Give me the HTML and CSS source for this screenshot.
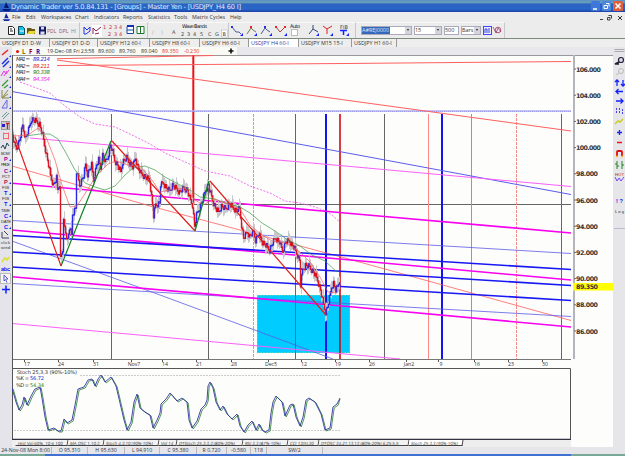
FILE: index.html
```
<!DOCTYPE html>
<html>
  <head>
    <meta charset="utf-8">
    <title>Dynamic Trader</title>
    <link rel="stylesheet" href="styles.css">
  </head>
  <body>
    <div class="titlebar">
      <svg class="logo" width="9" height="9" viewBox="0 0 9 9"><path d="M4 0L7 6H2zM0 7h9L7 9H2z" fill="#001878"/></svg>
      <svg class="title-text" width="234" height="12"><text x="0" y="9" textLength="230">Dynamic Trader ver 5.0.84.131 - [Groups] - Master Yen - [USDJPY_H4 60 I]</text></svg>
      <div class="winbtns">
        <svg width="9" height="10"><rect width="9" height="10" rx="1.5" fill="#3f78d8"/><path d="M2 8h4" stroke="#fff" stroke-width="1.5"/></svg>
        <svg width="9" height="10"><rect width="9" height="10" rx="1.5" fill="#4a86dc"/><path d="M4 2.5h3v3M2 4.5h3.500v3H2z" stroke="#fff" fill="none"/></svg>
        <svg width="10" height="10"><rect width="10" height="10" rx="1.5" fill="#e0603c"/><path d="M2.500 2.500l5 5M7.500 2.500l-5 5" stroke="#fff" stroke-width="1.500"/></svg>
      </div>
    </div>
    <div class="menubar">
      <svg width="9" height="8" viewBox="0 0 9 9"><path d="M4 0L7 6H2zM0 7h9L7 9H2z" fill="#1028a0"/></svg>
      <span>File</span><span>Edit</span><span>Workspaces</span><span>Chart</span><span>Indicators</span><span>Reports</span><span>Statistics</span><span>Tools</span><span>Matrix Cycles</span><span>Help</span>
      <svg class="mdi" width="26" height="9"><path d="M1 6.500h3M9.500 2.500h3v3M8.500 4.500h2.500v2.500H8.500z" stroke="#444" fill="none"/><path d="M19 3l4 4M23 3l-4 4" stroke="#333"/></svg>
    </div>
    <div class="toolbar">
      <div class="group files">
        <svg width="43" height="16">
          <path d="M4.500 4.500h4l2 2v6h-6zM6 7h2M6 9h3" fill="#fff" stroke="#222"/>
          <path d="M14.500 4.500h4l2 2v6h-6z" fill="#10c8e8" stroke="#145"/><path d="M16 9h4" stroke="#fff"/>
          <path d="M23 6h4l1 1h3v5h-8z" fill="#665a10"/><path d="M25 9h7l-2 3h-7z" fill="#e8d830"/>
          <path d="M35 4.500h7v8h-7z" fill="#10186c"/><path d="M37 5h3v2.500h-3zM36.500 9.500h4v3h-4z" fill="#dde"/>
        </svg>
        <span class="pdl">PDL</span><span class="pdl">DPL</span><span class="dim">HI</span>
      </div>
      <div class="group modes">
        <svg width="44" height="17">
          <path d="M2 12V5l3 3 3-3v4L4 12z" fill="none" stroke="#2030f0"/>
          <rect x="10" y="3" width="10" height="12" fill="#fff"/><path d="M11 12V6l3 3 5-4M13 12l4-1" fill="none" stroke="#902050"/>
          <g class="wave red"><text x="21" y="6.500">1</text><text x="27" y="6.500">2</text><text x="32" y="6.500">3</text><text x="37" y="6.500">4</text><text x="26" y="13.500">2</text><text x="32" y="13.500">3</text><text x="37" y="13.500">4</text></g>
        </svg>
        <svg width="20" height="15"><path d="M1 3.500h6.500v7H1zM1 7h6.500" fill="#fff" stroke="#164aa0"/><path d="M1 3h7" stroke="#1030b8" stroke-width="2"/><path d="M11 3.500h7v7h-7zM14.500 3v8" fill="#fff" stroke="#187828"/></svg>
      </div>
      <div class="group bands">
        <svg width="79" height="17"><g class="wave"><text x="3" y="12" fill="#aaa">/</text><text x="12" y="12" fill="#aaa">)</text><text x="23" y="12">A</text><text x="33" y="6" textLength="25" fill="#111">Wave Bands</text><text x="32" y="14">2</text><text x="38" y="14">3</text><text x="44" y="14">4</text><text x="51" y="14">5</text><text x="59" y="14">C</text><text x="66" y="14">G</text><rect x="72.500" y="8" width="6" height="7" fill="#fff" stroke="#aaa" stroke-width=".5"/><text x="73.500" y="14">B</text></g></svg>
      </div>
      <div class="group swings">
        <svg width="76" height="17">
          <g fill="none" stroke="#4a5a9a"><path d="M2 5l4 5h3l2 2"/><path d="M17 12l4-6 2 2 3 2" stroke="#775"/><path d="M31 12l4-6 2 2 3 2"/><path d="M46 5l4 5 5-5" stroke="#a44"/></g>
          <path d="M20 4h2v2h-2zM45 4h2v2h-2zM54 4h2v2h-2z" fill="#e22"/><path d="M1 4h2v2H1zM34 4h2v2h-2z" fill="#23d"/>
          <path d="M10 14h3v-3zM24 14h3v-3zM39 14h3v-3zM54 14h3v-3z" fill="#12f"/>
          <g class="wave"><text x="60" y="6" textLength="10" fill="#111">Auto</text></g><rect x="61.500" y="7.500" width="6" height="6" fill="#fff" stroke="#bbb"/>
        </svg>
        <svg width="46" height="17">
          <path d="M2 12l4-5 5 3M6 3v4" fill="none" stroke="#347"/><path d="M16 4l4 3 5-3M20 7v5" fill="none" stroke="#d22"/>
          <path d="M9 14h3v-3zM23 14h3v-3zM39 14h3v-3z" fill="#12f"/><g class="wave"><text x="33" y="7" textLength="8">FIB</text></g><path d="M33 8.500h7M36.500 9v4" stroke="#12f" stroke-width="1.500"/>
        </svg>
      </div>
      <div class="group fields">
        <div class="field symbol"><b>A#REJ0000</b><i></i></div>
        <div class="field period">15<i></i></div>
        <div class="field count">500</div>
        <div class="field bars">Bars<i></i></div>
        <svg width="19" height="11"><rect x=".5" y="1.500" width="8" height="8" fill="#eef" stroke="#44f"/><path d="M2 8V4h2v4M6 3v5" stroke="#34e" fill="none"/><path d="M10 2l3 6 2-5 3 4" stroke="#a04878" fill="none" stroke-width=".8"/><circle cx="15" cy="5" r="2.800" stroke="#a03060" fill="none" stroke-width=".8"/></svg>
      </div>
    </div>
    <div class="charttabs">
      <span>USDJPY D1 D-W</span><span>USDJPY D1 D-D</span><span>USDJPY H12 60-I</span><span>USDJPY H8 60-I</span><span>USDJPY H6 60-I</span><span class="active">USDJPY H4 60-I</span><span>USDJPY M15 15-I</span><span>USDJPY H1 60-I</span>
    </div>
    <div class="main">
      <div class="drawtools">
        <svg width="12" height="247" viewBox="0 47 12 247">
          <g fill="none">
            <path d="M2 55l6-5" stroke="#e22" stroke-width="1.500"/>
            <path d="M2 64l6-6M3 67l6-6" stroke="#23d" stroke-width="1.500"/>
            <path d="M1 76l3-5 2 3 3-4M4 76l3-5" stroke="#e3d"/>
            <path d="M2 86l6-6M4 88l4-3" stroke="#393" stroke-width="1.200"/>
            <path d="M2 90v8h7M2 98l6-8M2 98l6-4" stroke="#884"/>
            <path d="M2 108l5-8v8H2" stroke="#66d"/>
            <path d="M2 117l5-5M3 119l6-6" stroke="#698"/>
            <rect x="1.500" y="121.500" width="8" height="8" fill="#ccc" stroke="#999"/>
            <path d="M2 124h3v3H2z" fill="#22c"/><path d="M6 123.500h3M7.500 124v5" stroke="#b22" stroke-width="1.300"/>
            <rect x="3.500" y="133.500" width="5" height="5" stroke="#f66"/><path d="M3 133h1M8 133h1M3 139h1M8 139h1" stroke="#f66"/>
            <path d="M1 148l2-3 2 4 2-6 2 3" stroke="#245"/>
            <path d="M2 232v6h7M4 231l4 4" stroke="#445"/>
            <path d="M2 262l3-4 2 2 2-3" stroke="#dd3" stroke-width="1.500"/>
            <rect x=".5" y="273.500" width="10" height="10" fill="#f6f6f6" stroke="#bbb"/><path d="M4 275v6l1.500-1.500 1.500 3M4 275l4 4H6" stroke="#55c"/>
            <path d="M2 289.500h8M6 285.500v8" stroke="#12f" stroke-width="1.500"/>
          </g>
          <path d="M9 57h2v-2zM9 68h2v-2zM9 78h2v-2zM9 88h2v-2zM9 98h2v-2zM9 109h2v-2zM9 161h2v-2zM9 172h2v-2zM9 184h2v-2zM9 195h2v-2zM9 206h2v-2zM9 217h2v-2zM9 229h2v-2z" fill="#12f"/>
          <g class="toolcap">
            <text x="1" y="155" textLength="9">BOW</text><text x="1" y="166.300" textLength="9">PRICE</text><text x="2" y="177.600" textLength="8">PCT</text><text x="2" y="188.900" textLength="7">FIB</text><text x="2" y="200.200" textLength="7">FIB</text><text x="1" y="211.500" textLength="9">TIME</text><text x="1" y="222.800" textLength="10">DATE</text><text x="1" y="244" textLength="9">click</text><text x="1" y="249" textLength="9">wind</text>
          </g>
          <g class="toolkey">
            <text x="4" y="161.200" fill="#909">P</text><text x="4" y="172.500" fill="#909">C</text><text x="4" y="183.800" fill="#b15">P</text><text x="4" y="195.100">T</text><text x="4" y="206.400">T</text><text x="4" y="217.700">C</text><text x="4" y="229">C</text><text x="1" y="271" textLength="9">abc</text>
          </g>
        </svg>
      </div>
      <div class="center">
        <div class="inforow">
          <i class="dot"></i><b class="olive">L</b><b class="maroon">F</b><b class="navy">R</b>
          <span>19-Dec-08 Fri 23:58</span><span>89.600</span><span>89.760</span><span>89.040</span><span class="down">89.350</span><span class="down">-0.230</span>
          <svg width="6" height="6"><path d="M3 .5v5M.5 3h5" stroke="#111" stroke-width="1.600"/></svg>
        </div>
        <svg class="chart" id="chart" width="601" height="385" viewBox="12 55 601 385">
          <path d="M12 55.500h601" stroke="#999"/>
          <path d="M574 55v304" stroke="#b4b4bc" stroke-width="2"/>
          <rect x="257" y="295" width="93" height="58" fill="#00ccff"/>
          <rect x="257.500" y="295.500" width="92" height="57" fill="none" stroke="#8d9" stroke-dasharray="1 2"/>
          <!-- time projections -->
          <g stroke="#666"><path d="M111.500 114v245M208.500 114v245M295.500 114v245M384.500 114v245M561.500 114v245"/><path d="M12 204.500h559"/><path d="M471.500 114v245" stroke="#999"/></g>
          <g stroke="#f88"><path d="M428.500 114v245"/><path d="M253.500 114v245M516.500 114v245" stroke-dasharray="3 1"/></g>
          <path d="M326 114v245M442 114v245" stroke="#1414f0" stroke-width="2"/>
          <path d="M340 114v245" stroke="#d00a18" stroke-width="1.600"/>
          <path d="M193.300 55v150" stroke="#ee1018" stroke-width="2"/>
          <!-- trend lines -->
          <g fill="none">
            <path d="M12 111h559" stroke="#b0b0f4" stroke-width="1.400"/>
            <path d="M12 111.500h559" stroke="#8080e0" stroke-dasharray="1 1" stroke-width=".6"/>
            <path d="M57 60L345 100L571 131M57 58.700L213 55.500M57 65.500L345 63.500L571 61.500" stroke="#ff6060"/>
            <path d="M12 166L150 206L345 258L571 320.500" stroke="#ff6060" stroke-width=".8"/>
            <path d="M12 91.500L160 118.500L350 153.500L571 194.500" stroke="#5c5cee"/>
            <path d="M12 220.500L345 240L571 253.500M12 283.500L345 303.500L571 316.500M12 241L160 295L333 359" stroke="#5c5ce8" stroke-width=".8"/>
            <path d="M30 138L160 149.500L345 166L571 186.500M12 323.500L150 336L345 354L400 359" stroke="#fa60fa"/>
            <path d="M20 82L50 93L65 106L80 117L95 124L115 127L130 134L150 144L165 153L185 162L205 171L230 176L250 186L270 193L285 201L300 203L315 207L328 212L340 222" stroke="#f070f0" stroke-dasharray="2 1.500"/>
          </g>
          <g fill="none" stroke-width="1.600">
            <path d="M12 183.300L345 213L571 233M12 230L345 259.500L571 280M12 276.700L345 306.300L571 327" stroke="#f800f0"/>
            <path d="M12 235.500L345 255.500L571 269.500M12 252L345 271.500L571 285.500M12 267L345 286.700L571 300.500" stroke="#1818f4"/>
          </g>
          <g id="candles"></g>
          <!-- moving averages -->
          <g fill="none" stroke-width=".7">
            <path d="M25 136L40 134L50 134L58 139L66 153L75 170L85 183L95 187L105 190L115 186L125 175L133 168L145 166L155 170L165 177L180 185L190 190L200 197L215 199L225 203L240 207L250 213L262 223L275 231L288 240L300 246L312 255L325 261L337 272" stroke="#3c9a4c"/>
            <path d="M14 136L28 135L38 128L46 137L55 160L62 185L70 207L77 206L86 192L96 176L108 164L116 161L128 165L140 166L152 180L160 192L170 190L185 188L195 200L203 205L214 199L225 203L240 209L250 225L262 235L272 241L286 243L300 252L310 262L320 277L328 292L336 293" stroke="#f06060"/>
          </g>
          <g fill="none" stroke-width="1.200"><path d="M15 137L61 266M112 141L195 231M210 181L326 315" stroke="#e02020"/><path d="M61 266L111 141M195 231L209 181" stroke="#108020"/></g>
          <g class="malabels">
            <text x="16" y="61" textLength="14">MA1 =</text><text x="33" y="61" textLength="17" fill="#22d">89.214</text>
            <text x="16" y="67.500" textLength="14">MA2 =</text><text x="33" y="67.500" textLength="17" fill="#e22">89.211</text>
            <text x="16" y="74" textLength="14">MA3 =</text><text x="33" y="74" textLength="17" fill="#171">90.338</text>
            <text x="16" y="80.500" textLength="14">MA4 =</text><text x="33" y="80.500" textLength="17" fill="#e2e">94.354</text>
          </g>
          <g id="prices" class="prices"><rect x="573" y="283" width="40" height="7.500" fill="#ffff00"/><text x="576" y="289.300" textLength="22">89.350</text></g>
          <path d="M12 359.500h559" stroke="#777"/>
          <g id="dates" class="dates"></g>
          <!-- stochastic panel -->
          <path d="M12 368.500h558.500V440" fill="none" stroke="#555"/><path d="M12.500 55v385" stroke="#555"/><path d="M12 439.500h559" stroke="#334" stroke-width="1.500"/>
          <path d="M80 375.500h261M14 430.500h327" stroke="#ccc" stroke-dasharray="2 1"/>
          <g id="stoch" fill="none"></g>
          <rect x="16" y="370" width="30" height="17" fill="#fdfdfb"/>
          <g class="stochlabels"><text x="17" y="374.300" textLength="60">Stoch 25,3,3 (90%-10%)</text><text x="16" y="380.400" textLength="13">%K =</text><text x="30" y="380.400" textLength="14" fill="#22b">56.72</text><text x="16" y="386.500" textLength="13">%D =</text><text x="30" y="386.500" textLength="14" fill="#282">54.34</text></g>
        </svg>
        <div class="studytabs">
          <span>Hist Vol 60%, 10-6 100</span><span>MA OSC 1,10,3</span><span>Stoch 4,3,10 (90%-10%)</span><span>Vol 14</span><span>DTStoch 25,3,3,3 (80%-20%)</span><span>RSI 3,3 (87%-10%)</span><span>CCI 13(5),30</span><span>DTOSC 34,21,13,13 (80%-20%) 6,25,5,5</span><span class="active">Stoch 25,3,3 (90%-10%)</span>
        </div>
      </div>
      <div class="sidetools">
        <svg width="12" height="247" viewBox="613 47 12 247">
          <path d="M614.500 49.500h10M614.500 51.500h10" stroke="#aaa"/>
          <circle cx="621" cy="60" r="2.500" fill="#dde" stroke="#223" stroke-width="1.200"/><path d="M619 62l-4 2h4" stroke="#223" fill="none" stroke-width="1.500"/>
          <circle cx="621" cy="71" r="2.500" fill="none" stroke="#bbb"/><path d="M619 73l-3 2" stroke="#bbb"/>
          <g stroke="#12f" stroke-width="1.300" fill="none"><path d="M617 86v-6M615 82l2-2 2 2M623 80v6M621 84l2 2 2-2M616 91.500h7M618.500 89l-2.500 2.500 2.500 2.500M616 101h7M620.500 98.500L623 101l-2.500 2.500M617 132.500h5M619.500 130v5"/></g>
          <path d="M616.500 108v6M619.500 108v6M622.500 109v5" stroke="#44e" stroke-dasharray="2 1"/>
          <path d="M615 124l3-3 2 1 3-3" stroke="#cc2" stroke-width="1.500" fill="none"/>
          <path d="M617 142.500h5" stroke="#e11" stroke-width="1.500"/>
          <path d="M617 157v-5q0-1 1-1h3q1 0 1 1v5" stroke="#d11" stroke-width="1.800" fill="none"/><path d="M616 156.500h2M621 156.500h2" stroke="#fb2" stroke-width="1.500"/>
          <path d="M617 161v8M615 164h2M622 161v8M617 166h2M622 165h2" stroke="#282"/>
          <g class="toolcap"><text x="615" y="176" textLength="9" fill="#a22">HOT</text><text x="615" y="213" textLength="9">Log</text></g>
          <path d="M615 177l2 4 2-3 2 3 3-4" stroke="#74e" fill="none"/>
          <g class="toolkey"><text x="616" y="203" textLength="7">!?</text></g>
          <path d="M614 228.500h11" stroke="#bbc"/>
        </svg>
      </div>
    </div>
    <div class="statusbar">
      <span>24-Nov-08 Mon 8:00</span><span>O 95.310</span><span>H 95.630</span><span>L 94.910</span><span>C 95.380</span><span>R 0.720</span><span>-0.580</span><span>118</span><span>SW/2</span>
    </div>
    <div class="taskedge"></div>
    <script src="chart.js"></script>
  </body>
</html>
```

FILE: styles.css
```
body { margin: 0; width: 625px; height: 456px; overflow: hidden; display: flex; flex-direction: column; background: #ececec; font-family: "Open Sans", "DejaVu Sans", sans-serif; font-size: 5.400px; line-height: 8px; color: #333; white-space: nowrap; }
svg { display: block; flex: none; }
span { overflow: visible; }

.titlebar { height: 12px; flex: none; display: flex; align-items: center; padding-left: 2px; background: linear-gradient(#5a90c8, #6aa0b8 20%, #2c62c4 35%, #2868c8 75%, #2040a8); }
.title-text { font-size: 6.700px; fill: #e4ecff; font-family: "DejaVu Sans", sans-serif; }
.winbtns { margin-left: auto; display: flex; gap: 2px; padding-right: 2px; }

.menubar { height: 10px; flex: none; display: grid; grid-template-columns: 10px 14px 15px 34px 19px 29px 25px 26px 18px 38px 1fr auto; align-items: center; padding-left: 2px; }

.toolbar { height: 16px; flex: none; display: flex; border-bottom: 1px solid #7c8c7c; width: 100%; }
.group { display: flex; align-items: center; border-right: 1px solid #c8c8cc; border-top: 1px solid #f8f8f8; margin-right: 1px; box-sizing: border-box; flex: none; }
.group svg { margin-top: -1px; }
.files { padding-left: 4px; width: 80px; font-size: 5px; }
.modes { width: 67px; padding-left: 1px; }
.bands { width: 80px; }
.swings { width: 126px; justify-content: space-between; padding-right: 2px; }
.pdl { color: #905070; width: 12px; }
.dim { color: #888; }
.wave { font-family: "DejaVu Sans", sans-serif; font-size: 5px; fill: #444; }
.wave.red { fill: #c03048; }
.fields { gap: 2px; padding-left: 4px; padding-right: 2px; }
.field { height: 7px; line-height: 7px; border: 1px solid #aab; background: #fff; display: flex; justify-content: space-between; }
.field b { background: #3468b8; color: #dde8ff; font-weight: normal; width: 28px; }
.field i { width: 6px; background: #d4d4dc; display: flex; align-items: center; justify-content: center; }
.field i::after { content: ""; border: 1.500px solid transparent; border-top: 2px solid #222; }
.symbol { width: 49px; }
.period { width: 26px; }
.count { width: 13px; }
.bars { width: 18px; }

.charttabs { height: 8px; flex: none; display: grid; grid-template-columns: 50px 48px 52px 50px 49px 50px 53px 45px; font-size: 5.400px; line-height: 8px; background: #eee; }
.charttabs span { padding-left: 2px; border-right: 1px solid #999; }
.charttabs .active { background: #fff; color: #3a3aa0; }

.main { flex: 1; display: flex; min-height: 0; }
.drawtools { width: 12px; flex: none; background: #e4e4ea; }
.center { width: 601px; flex: none; background: #fdfdfb; }
.sidetools { width: 12px; flex: none; background: #e6e6ea; }
.toolcap { font-family: "Liberation Sans", sans-serif; font-size: 4.200px; fill: #333; }
.toolkey { font-family: "Liberation Sans", sans-serif; font-size: 5.600px; font-weight: bold; fill: #1220ee; }

.inforow { height: 8px; display: grid; grid-template-columns: 6px 7px 7px 11px 51px 21px 22px 21px 22px 44px 1fr; align-items: center; padding-left: 4px; background: linear-gradient(90deg, #fafaf4 225px, #e8e8ec 225px); font-size: 5.300px; line-height: 7px; }
.inforow b { font-size: 6.200px; }
.dot { width: 3px; height: 3px; border-radius: 50%; background: #e01010; }
.olive { color: #777700; }
.maroon { color: #900000; }
.navy { color: #2020b0; }
.down { color: #e83030; }

.malabels { font-family: "DejaVu Sans", sans-serif; font-size: 5.400px; font-style: italic; fill: #333; }
.prices { font-family: "DejaVu Sans", sans-serif; font-weight: bold; font-size: 6.300px; fill: #333; }
.dates { font-size: 5.200px; fill: #333; text-anchor: middle; }
.stochlabels { font-family: "DejaVu Sans", sans-serif; font-size: 5.100px; fill: #333; }

.studytabs { height: 7px; display: grid; grid-template-columns: 52px 36px 55px 18px 66px 45px 31px 90px 54px; padding-left: 4px; background: #eee; width: 555px; font-size: 4.350px; line-height: 6px; }
.studytabs span { border-bottom: 1px solid #444; border-right: 1px solid #444; transform: skewX(-10deg); padding-left: 2px; box-sizing: border-box; height: 6px; background: #f2f2f2; }
.studytabs .active { background: #fff; }

.statusbar { height: 7px; flex: none; display: grid; grid-template-columns: 52px 36px 37px 35px 37px 30px 24px 16px 56px; font-size: 5.200px; line-height: 7px; background: #e6e6ea; text-align: center; }
.statusbar span { border-right: 1px solid #bbb; }
.taskedge { height: 2px; flex: none; background: linear-gradient(90deg, #78a898 45px, #4070d0 45px, #4070d0 571px, #78a898 571px); }
```

FILE: chart.js
```
const NS = "http://www.w3.org/2000/svg";

function add(parent, tag, attrs, text) {
  const el = document.createElementNS(NS, tag);
  for (const k in attrs) el.setAttribute(k, attrs[k]);
  if (text) el.textContent = text;
  document.getElementById(parent).appendChild(el);
}

// price swings, x,y pairs
const swings = [12,130,15,145,17,148,20,140,23,126,26,138,29,130,32,119,36,121,40,124,43,135,46,150,49,165,51,176,54,185,57,178,58,190,60,184,61,258,63,250,64,222,66,232,68,240,70,228,72,235,73,214,76,208,77,172,80,185,84,176,86,165,88,174,92,165,94,180,97,165,99,160,101,168,103,155,106,162,108,158,111,145,113,152,115,160,118,165,121,172,123,162,127,158,130,163,133,167,136,158,138,166,141,173,146,177,150,180,153,205,154,216,156,205,160,203,161,185,164,183,167,188,170,191,173,185,176,188,180,192,184,188,188,190,190,198,193,205,195,226,197,215,200,208,203,200,206,190,209,184,210,190,213,200,216,208,219,212,222,206,226,209,230,204,236,210,240,209,242,225,244,238,248,232,250,236,254,232,256,240,259,234,263,242,266,245,270,250,273,243,276,238,280,242,283,251,286,242,290,241,294,247,298,255,300,260,301,285,303,270,306,265,310,267,314,272,318,280,321,290,324,305,326,312,328,307,330,298,332,287,334,283,336,290,338,287,340,280];

let wicks = "", up = "", down = "";
let last = swings[1];
for (let i = 0; i < swings.length - 2; i += 2) {
  const [x0, y0, x1, y1] = swings.slice(i, i + 4);
  for (let x = x0; x < x1; x++) {
    const jitter = ((x * 37) % 7 - 3) * 0.9;
    const y = y0 + (y1 - y0) * (x + 1 - x0) / (x1 - x0) + jitter;
    const top = Math.min(last, y), bottom = Math.max(last, y);
    wicks += `M${x + .5} ${top - 2 - (x * 13) % 7}V${bottom + 2 + (x * 11) % 6}`;
    const body = `M${x + .5} ${top - .5}V${bottom + .8}`;
    if (y < last) up += body; else down += body;
    last = y;
  }
}
add("candles", "path", { d: wicks, stroke: "#c8c8cc" });
add("candles", "path", { d: up, stroke: "#2828e8", "stroke-width": 1.4 });
add("candles", "path", { d: down, stroke: "#dc1424", "stroke-width": 1.4 });

for (let p = 106, y = 69; p >= 86; p -= 2, y += 26.2) {
  add("prices", "path", { d: `M574 ${y}h2`, stroke: "#666" });
  add("prices", "text", { x: 576, y: y + 2.5, textLength: p >= 100 ? 25 : 22 }, p + ".000");
}

const dates = [["17",27],["24",61],["31",96],["Nov7",134],["14",165],["21",199],["28",234],["Dec5",271],["12",304],["19",338],["26",372],["Jan2",409],["9",441],["16",477],["23",511],["30",545]];
for (const [label, x] of dates) {
  add("dates", "path", { d: `M${x - 2.5} 360v2`, stroke: "#555" });
  add("dates", "text", { x, y: 365.5 }, label);
}

const k = [12,388,16,402,19,410,22,405,24,397,27,405,31,396,35,389,40,387,42,398,45,417,48,430,54,428,58,431,61,431,64,419,67,423,72,420,75,405,78,389,84,387,88,380,92,379,95,386,98,379,101,375,105,382,111,377,116,386,120,403,124,420,127,430,131,422,134,402,137,394,140,408,145,412,150,415,153,428,157,420,160,413,161,404,166,399,170,393,177,401,182,398,187,402,189,420,192,428,197,421,201,409,205,405,207,400,208,386,210,382,213,388,216,402,220,410,223,406,227,414,232,419,237,414,240,426,244,432,248,425,252,421,256,430,259,424,262,430,265,432,269,430,271,413,273,402,276,396,282,402,285,416,290,405,293,404,296,417,300,426,303,417,306,400,309,398,315,402,321,414,325,430,330,428,333,407,337,404,340,398];
const d = k.map((v, i) => i % 2 ? v + 1 : Math.min(v + 1.2, 340));
add("stoch", "polyline", { points: d.join(" "), stroke: "#3c8a4c", "stroke-width": .9 });
add("stoch", "polyline", { points: k.join(" "), stroke: "#3434a0", "stroke-width": .9 });
```
